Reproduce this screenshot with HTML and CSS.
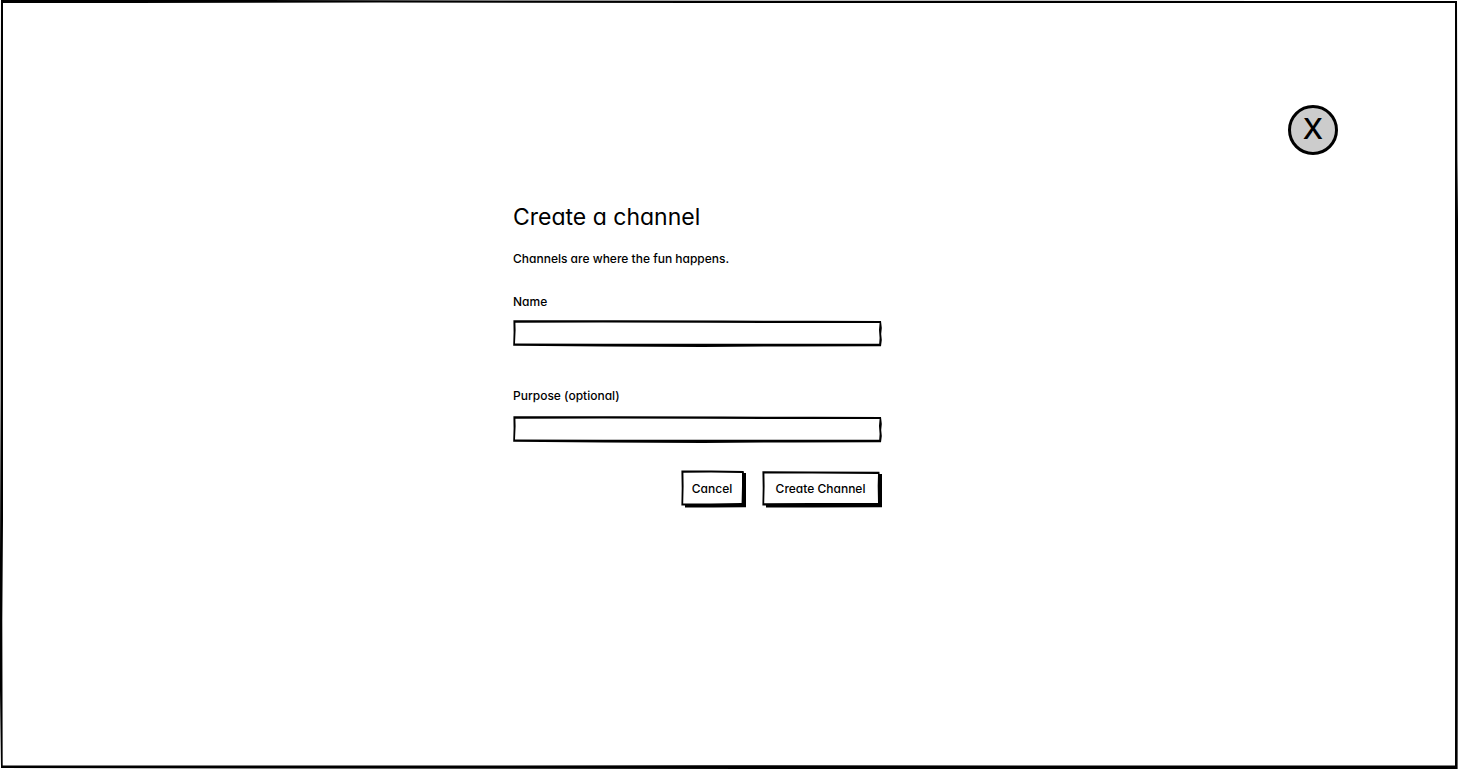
FILE: index.html
```html
<!DOCTYPE html>
<html lang="en">
<head>
<meta charset="utf-8">
<meta name="viewport" content="width=device-width, initial-scale=1">
<title>Create a channel</title>
<link rel="stylesheet" href="styles.css">
</head>
<body>
<div class="page">
  <svg class="sketch" viewBox="0 0 1458 769" preserveAspectRatio="none" aria-hidden="true">
    <path fill-rule="evenodd" d="M1 0L260 0L500 0.6L1457 1L1457.4 160L1458 220L1458 560L1457.6 769L900 769L260 768.6L1 768L0 690L0 560L0.6 400L0.6 180ZM3 3L3 520L2.3 620L2.7 765.6L700 765.3L1455 765.6L1455.3 420L1455 240L1455 3L700 2.9L380 2.6L130 3Z"/>
  </svg>
  <header class="top">
    <button class="close" type="button" aria-label="X">X</button>
  </header>
  <main class="content">
    <form class="form">
      <h1 class="title">Create a channel</h1>
      <p class="intro">Channels are where the fun happens.</p>
      <label class="label" for="name">Name</label>
      <div class="field">
        <svg class="sketch" viewBox="0 0 369 27" preserveAspectRatio="none" aria-hidden="true">
          <path fill-rule="evenodd" d="M0.4 0.2L100 0.2L210 0.5L300 0.8L368 1L368.8 8L368.2 14L368.8 20L368 26.2L280 26.4L190 27L90 26.4L0.2 25.8L0.6 12ZM2.4 2.8L2.6 10L2 23.6L90 23.8L190 23.8L280 23.7L366.2 23.7L366.6 18L366 10L366.6 3L290 3L190 2.8L90 2.6Z"/>
        </svg>
        <input class="input" id="name" type="text">
      </div>
      <label class="label label-purpose" for="purpose">Purpose (optional)</label>
      <div class="field field-purpose">
        <svg class="sketch" viewBox="0 0 369 27" preserveAspectRatio="none" aria-hidden="true">
          <path fill-rule="evenodd" d="M0.4 0.2L100 0.2L210 0.5L300 0.8L368 1L368.8 8L368.2 14L368.8 20L368 26.2L280 26.4L190 27L90 26.4L0.2 25.8L0.6 12ZM2.4 2.8L2.6 10L2 23.6L90 23.8L190 23.8L280 23.7L366.2 23.7L366.6 18L366 10L366.6 3L290 3L190 2.8L90 2.6Z"/>
        </svg>
        <input class="input" id="purpose" type="text">
      </div>
      <div class="actions">
        <button class="button cancel" type="button">
          <svg class="sketch" viewBox="0 0 65 38" preserveAspectRatio="none" aria-hidden="true">
            <path fill-rule="evenodd" d="M0.4 0.6L30 0.6L62.6 1L63 3L65 3L65 37.2L32 37.4L4 37.4L4 35.6L0.4 35.4L0.7 18ZM2.4 2.8L2.6 16L2.2 33.6L30 33.4L60.6 33L61 16L61 3L30 2.6Z"/>
          </svg>
          <span class="caption">Cancel</span>
        </button>
        <button class="button create" type="submit">
          <svg class="sketch" viewBox="0 0 120 38" preserveAspectRatio="none" aria-hidden="true">
            <path fill-rule="evenodd" d="M0.4 1.2L50 1.5L117.4 1.8L117.6 4L120 4L120 37.2L50 37.4L4 37.4L4 35.6L0.4 35.4L0.7 18ZM2.4 3.4L2.6 16L2.2 33.3L50 33L116 33L115.7 16L116 4L50 3.6Z"/>
          </svg>
          <span class="caption">Create Channel</span>
        </button>
      </div>
    </form>
  </main>
</div>
</body>
</html>
```
FILE: styles.css
```css
* {
  box-sizing: border-box;
}

body {
  margin: 0;
  background: #fff;
  color: #000;
  font-family: Inter, Lato, sans-serif;
  font-size: 12px;
  font-weight: 500;
  line-height: 20px;
  font-feature-settings: "cv11";
}

.page {
  position: relative;
  min-height: 100vh;
}

.sketch {
  position: absolute;
  inset: 0;
  width: 100%;
  height: 100%;
  pointer-events: none;
}

.top {
  display: flex;
  justify-content: flex-end;
  padding: 105px 120px 0;
}

.close {
  width: 50px;
  height: 50px;
  padding: 0 0 2px;
  border: 3px solid #000;
  border-radius: 50%;
  background: #ccc;
  color: #000;
  font: inherit;
  font-size: 29px;
  line-height: 40px;
}

.content {
  display: grid;
  grid-template-columns: 513fr 369px 576fr;
  padding-top: 46px;
}

.form {
  display: flex;
  flex-direction: column;
  grid-column: 2;
}

.title {
  margin: 0;
  font-size: 23px;
  font-weight: 400;
  line-height: 32px;
}

.intro {
  margin: 16px 0 23px;
}

.label-purpose {
  margin-top: 39px;
}

.field {
  position: relative;
  height: 27px;
  margin-top: 8px;
}

.field-purpose {
  margin-top: 10px;
}

.input {
  display: block;
  width: 100%;
  height: 100%;
  padding: 3px 8px;
  border: 0;
  background: transparent;
  color: inherit;
  font: inherit;
}

.actions {
  display: flex;
  justify-content: flex-end;
  gap: 16px;
  margin-top: 27px;
}

.button {
  position: relative;
  height: 38px;
  padding: 0 3px 0 0;
  border: 0;
  background: transparent;
  color: inherit;
  font: inherit;
  font-feature-settings: inherit;
}

.cancel {
  width: 65px;
}

.create {
  width: 120px;
}
```
